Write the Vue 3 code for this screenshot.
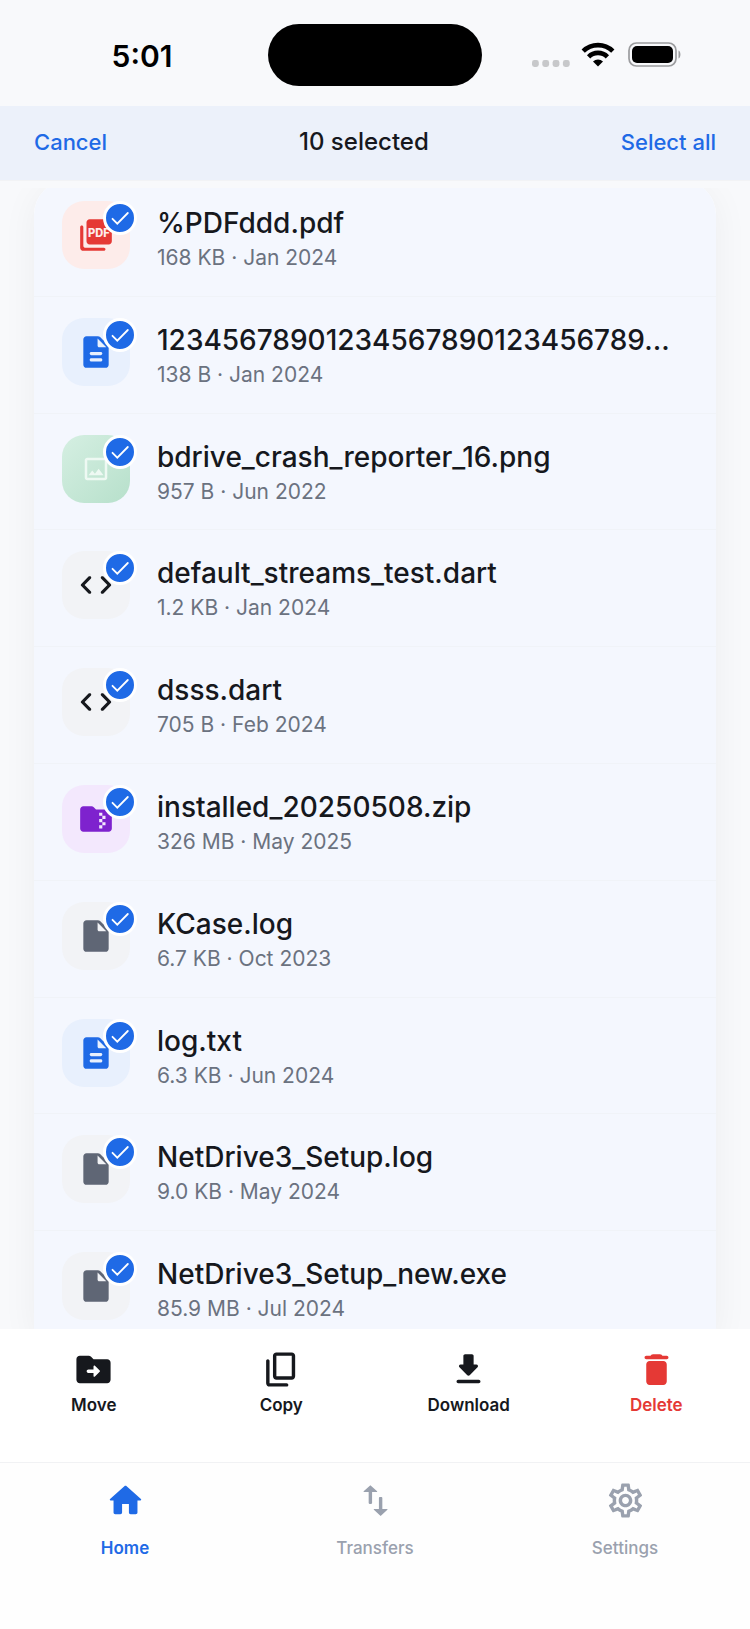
<script setup>
import { ref, computed } from 'vue'

const folder = 'M20 6h-8l-1.41-1.41C10.21 4.21 9.7 4 9.17 4H4c-1.1 0-2 .9-2 2v12c0 1.1.9 2 2 2h16c1.1 0 2-.9 2-2V8c0-1.1-.9-2-2-2z'
const sheet = 'M14.59 2.59c-.38-.38-.89-.59-1.42-.59H6c-1.1 0-2 .9-2 2v16c0 1.1.89 2 1.99 2H18c1.1 0 2-.9 2-2V8.83c0-.53-.21-1.04-.59-1.41l-4.82-4.83z'
const fold = 'M13 8V3.5L18.5 9H14c-.55 0-1-.45-1-1z'

const icons = {
  pdf: 'M20 2H8c-1.1 0-2 .9-2 2v12c0 1.1.9 2 2 2h12c1.1 0 2-.9 2-2V4c0-1.1-.9-2-2-2zM3 6c-.55 0-1 .45-1 1v13c0 1.1.9 2 2 2h13c.55 0 1-.45 1-1s-.45-1-1-1H5c-.55 0-1-.45-1-1V7c0-.55-.45-1-1-1z',
  text: sheet + 'M15 18H9c-.55 0-1-.45-1-1s.45-1 1-1h6c.55 0 1 .45 1 1s-.45 1-1 1zm0-4H9c-.55 0-1-.45-1-1s.45-1 1-1h6c.55 0 1 .45 1 1s-.45 1-1 1z' + fold,
  image: 'M19 5v14H5V5h14m0-2H5c-1.1 0-2 .9-2 2v14c0 1.1.9 2 2 2h14c1.1 0 2-.9 2-2V5c0-1.1-.9-2-2-2zm-4.86 8.86l-3 3.87L9 13.14 6 17h12l-3.86-5.14z',
  code: 'M8.7 15.9L4.8 12l3.9-3.9c.39-.39.39-1.01 0-1.4-.39-.39-1.01-.39-1.4 0l-4.59 4.59c-.39.39-.39 1.02 0 1.41l4.59 4.6c.39.39 1.01.39 1.4 0 .39-.39.39-1.01 0-1.4zm6.6 0l3.9-3.9-3.9-3.9c-.39-.39-.39-1.01 0-1.4.39-.39 1.01-.39 1.4 0l4.59 4.59c.39.39.39 1.02 0 1.41l-4.59 4.6c-.39.39-1.01.39-1.4 0-.39-.39-.39-1.01 0-1.4z',
  zip: folder + 'M18 12h-2v2h2v2h-2v2h-2v-2h2v-2h-2v-2h2v-2h-2V8h2v2h2v2z',
  file: sheet + fold,
}

const files = ref([
  { name: '%PDFddd.pdf', info: '168 KB · Jan 2024', kind: 'pdf', selected: true },
  { name: '12345678901234567890123456789…', info: '138 B · Jan 2024', kind: 'text', selected: true },
  { name: 'bdrive_crash_reporter_16.png', info: '957 B · Jun 2022', kind: 'image', selected: true },
  { name: 'default_streams_test.dart', info: '1.2 KB · Jan 2024', kind: 'code', selected: true },
  { name: 'dsss.dart', info: '705 B · Feb 2024', kind: 'code', selected: true },
  { name: 'installed_20250508.zip', info: '326 MB · May 2025', kind: 'zip', selected: true },
  { name: 'KCase.log', info: '6.7 KB · Oct 2023', kind: 'file', selected: true },
  { name: 'log.txt', info: '6.3 KB · Jun 2024', kind: 'text', selected: true },
  { name: 'NetDrive3_Setup.log', info: '9.0 KB · May 2024', kind: 'file', selected: true },
  { name: 'NetDrive3_Setup_new.exe', info: '85.9 MB · Jul 2024', kind: 'file', selected: true },
])
const count = computed(() => files.value.filter((f) => f.selected).length)
const setAll = (value) => files.value.forEach((f) => { f.selected = value })

const actions = [
  { label: 'Move', path: folder + 'M12 15.79V14H9c-.55 0-1-.45-1-1s.45-1 1-1h3v-1.79c0-.45.54-.67.85-.35l2.79 2.79c.2.2.2.51 0 .71l-2.79 2.79c-.31.31-.85.09-.85-.36z' },
  { label: 'Copy', path: 'M15 20H5V7c0-.55-.45-1-1-1s-1 .45-1 1v13c0 1.1.9 2 2 2h10c.55 0 1-.45 1-1s-.45-1-1-1zm5-4V4c0-1.1-.9-2-2-2H9c-1.1 0-2 .9-2 2v12c0 1.1.9 2 2 2h9c1.1 0 2-.9 2-2zm-2 0H9V4h9v12z' },
  { label: 'Download', path: 'M16.59 9H15V4c0-.55-.45-1-1-1h-4c-.55 0-1 .45-1 1v5H7.41c-.89 0-1.34 1.08-.71 1.71l4.59 4.59c.39.39 1.02.39 1.41 0l4.59-4.59c.63-.63.19-1.71-.7-1.71zM5 19c0 .55.45 1 1 1h12c.55 0 1-.45 1-1s-.45-1-1-1H6c-.55 0-1 .45-1 1z' },
  { label: 'Delete', danger: true, path: 'M6 19c0 1.1.9 2 2 2h8c1.1 0 2-.9 2-2V9c0-1.1-.9-2-2-2H8c-1.1 0-2 .9-2 2v10zM18 4h-2.5l-.71-.71c-.18-.18-.44-.29-.7-.29H9.91c-.26 0-.52.11-.7.29L8.5 4H6c-.55 0-1 .45-1 1s.45 1 1 1h12c.55 0 1-.45 1-1s-.45-1-1-1z' },
]

const tabs = [
  { label: 'Home', active: true, path: 'M10 19v-5h4v5c0 .55.45 1 1 1h3c.55 0 1-.45 1-1v-7h1.7c.46 0 .68-.57.33-.87L12.67 3.6c-.38-.34-.96-.34-1.34 0l-8.36 7.53c-.34.3-.13.87.33.87H5v7c0 .55.45 1 1 1h3c.55 0 1-.45 1-1z' },
  { label: 'Transfers', path: 'M16 17.01V10.5c0-.3-.2-.5-.5-.5h-1c-.3 0-.5.2-.5.5v6.51h-2.8c-.2 0-.3.25-.15.4L15 21l3.95-3.59c.15-.15.05-.4-.15-.4H16zM9 3L5.05 6.59c-.15.15-.05.4.15.4H8v6.51c0 .3.2.5.5.5h1c.3 0 .5-.2.5-.5V6.99h2.8c.2 0 .3-.25.15-.4L9 3z' },
  { label: 'Settings', path: 'M19.43 12.98c.04-.32.07-.64.07-.98 0-.34-.03-.66-.07-.98l2.11-1.65c.19-.15.24-.42.12-.64l-2-3.46c-.09-.16-.26-.25-.44-.25-.06 0-.12.01-.17.03l-2.49 1c-.52-.4-1.08-.73-1.69-.98l-.38-2.65C14.46 2.18 14.25 2 14 2h-4c-.25 0-.46.18-.49.42l-.38 2.65c-.61.25-1.17.59-1.69.98l-2.49-1c-.06-.02-.12-.03-.18-.03-.17 0-.34.09-.43.25l-2 3.46c-.13.22-.07.49.12.64l2.11 1.65c-.04.32-.07.65-.07.98 0 .33.03.66.07.98l-2.11 1.65c-.19.15-.24.42-.12.64l2 3.46c.09.16.26.25.44.25.06 0 .12-.01.17-.03l2.49-1c.52.4 1.08.73 1.69.98l.38 2.65c.03.24.24.42.49.42h4c.25 0 .46-.18.49-.42l.38-2.65c.61-.25 1.17-.59 1.69-.98l2.49 1c.06.02.12.03.18.03.17 0 .34-.09.43-.25l2-3.46c.12-.22.07-.49-.12-.64l-2.11-1.65zm-1.98-1.71c.04.31.05.52.05.73 0 .21-.02.43-.05.73l-.14 1.13.89.7 1.08.84-.7 1.21-1.27-.51-1.04-.42-.9.68c-.43.32-.84.56-1.25.73l-1.06.43-.16 1.13-.2 1.35h-1.4l-.19-1.35-.16-1.13-1.06-.43c-.43-.18-.83-.41-1.23-.71l-.91-.7-1.06.43-1.27.51-.7-1.21 1.08-.84.89-.7-.14-1.13c-.03-.31-.05-.54-.05-.74s.02-.43.05-.73l.14-1.13-.89-.7-1.08-.84.7-1.21 1.27.51 1.04.42.9-.68c.43-.32.84-.56 1.25-.73l1.06-.43.16-1.13.2-1.35h1.39l.19 1.35.16 1.13 1.06.43c.43.18.83.41 1.23.71l.91.7 1.06-.43 1.27-.51.7 1.21-1.07.85-.89.7.14 1.13zM12 8c-2.21 0-4 1.79-4 4s1.79 4 4 4 4-1.79 4-4-1.79-4-4-4zm0 6c-1.1 0-2-.9-2-2s.9-2 2-2 2 .9 2 2-.9 2-2 2z' },
]
</script>

<template>
  <div class="screen">
    <div class="status">
      <time class="clock">5:01</time>
      <div class="island"></div>
      <div class="signals" aria-hidden="true">
        <svg class="dots" viewBox="0 0 38 8">
          <rect v-for="n in 4" :key="n" :x="(n - 1) * 10.3" y="0" width="6.8" height="7" rx="2.4" />
        </svg>
        <svg class="wifi" viewBox="0 0 34 26">
          <path d="M2.2 9.2a21 21 0 0 1 29.6 0" />
          <path d="M7.6 14.8a13.2 13.2 0 0 1 18.8 0" />
          <path class="solid" d="M12 19.4a7.2 7.2 0 0 1 10 0L17 24.5z" />
        </svg>
        <svg class="battery" viewBox="0 0 54 26">
          <rect class="shell" x="1" y="1" width="47" height="23" rx="7.5" />
          <rect x="4" y="4" width="41" height="17" rx="5" />
          <path class="cap" d="M50.5 8.5c2.6.8 2.6 7.2 0 8z" />
        </svg>
      </div>
    </div>

    <header class="toolbar">
      <button type="button" @click="setAll(false)">Cancel</button>
      <h1>{{ count }} selected</h1>
      <button type="button" @click="setAll(true)">Select all</button>
    </header>

    <main class="content">
      <ul class="files">
        <li v-for="file in files" :key="file.name">
          <label class="row" :class="{ selected: file.selected }">
            <span class="tile" :class="file.kind">
              <svg class="glyph" viewBox="0 0 24 24" aria-hidden="true">
                <path fill-rule="evenodd" :d="icons[file.kind]" />
                <text v-if="file.kind === 'pdf'" x="7" y="13">PDF</text>
              </svg>
              <span class="badge">
                <input v-model="file.selected" type="checkbox" :aria-label="file.name" />
                <svg v-if="file.selected" viewBox="0 0 28 28" aria-hidden="true">
                  <path d="M6.5 14.8l4.8 4.9L21.8 9" />
                </svg>
              </span>
            </span>
            <span class="details">
              <span class="name">{{ file.name }}</span>
              <span class="info">{{ file.info }}</span>
            </span>
          </label>
        </li>
      </ul>
    </main>

    <div class="actions">
      <button v-for="action in actions" :key="action.label" type="button" :class="{ danger: action.danger }">
        <svg viewBox="0 0 24 24" aria-hidden="true"><path fill-rule="evenodd" :d="action.path" /></svg>
        <span>{{ action.label }}</span>
      </button>
    </div>

    <nav class="tabs">
      <a v-for="tab in tabs" :key="tab.label" href="#" :class="{ active: tab.active }">
        <svg viewBox="0 0 24 24" aria-hidden="true"><path fill-rule="evenodd" :d="tab.path" /></svg>
        <span>{{ tab.label }}</span>
      </a>
    </nav>
  </div>
</template>

<style>
body {
  margin: 0;
  background: #f8f9fb;
}
</style>

<style scoped>
.screen {
  display: flex;
  flex-direction: column;
  min-height: 100vh;
  background: #f8f9fb;
  color: #16181d;
  font-family: Inter, "Liberation Sans", sans-serif;
}
button {
  border: 0;
  background: none;
  padding: 0;
  font: inherit;
  color: inherit;
  cursor: pointer;
}

.status {
  display: grid;
  grid-template-columns: 1fr 214px 1fr;
  align-items: center;
  padding: 24px 0 20px;
}
.clock {
  padding: 2px 0 0 16px;
  text-align: center;
  color: #000;
  font-size: 30px;
  font-weight: 600;
  line-height: 36px;
}
.island {
  height: 62px;
  border-radius: 31px;
  background: #000;
}
.signals {
  display: flex;
  align-items: center;
  padding-left: 50px;
}
.dots {
  width: 38px;
  height: 8px;
  margin: 18px 11px 0 0;
  fill: #c7c8ca;
}
.wifi {
  width: 34px;
  height: 26px;
  margin-right: 13px;
  fill: none;
  stroke: #000;
  stroke-width: 4.6;
}
.wifi .solid {
  fill: #000;
  stroke: none;
}
.battery {
  width: 54px;
  height: 26px;
}
.battery .shell {
  fill: none;
  stroke: #9b9c9e;
  stroke-width: 1.7;
}
.battery .cap {
  fill: #9b9c9e;
}

.toolbar {
  display: flex;
  justify-content: space-between;
  align-items: center;
  padding: 20px 34px 22px;
  background: #ecf1fa;
  border-bottom: 1px solid #f2f3f5;
}
.toolbar button {
  color: #1f6ae6;
  font-size: 22px;
  font-weight: 500;
  line-height: 28px;
}
.toolbar h1 {
  margin: 0;
  font-size: 24px;
  font-weight: 500;
  line-height: 32px;
}

.content {
  flex: 1;
  display: grid;
  margin-top: 7px;
  overflow: hidden;
}
.files {
  display: grid;
  grid-auto-rows: 1fr;
  min-width: 0;
  margin: -8px 34px -19px;
  padding: 0;
  list-style: none;
  border-radius: 35px;
  background: #fff;
  box-shadow: 0 6px 36px rgba(0, 0, 0, 0.05);
}
.files li {
  min-width: 0;
  border-bottom: 1px solid #f0f3f8;
}
.row {
  display: flex;
  align-items: flex-start;
  gap: 27px;
  box-sizing: border-box;
  height: 100%;
  padding: 21px 28px 0;
  cursor: pointer;
}
.row.selected {
  background: #f4f7fe;
}
.files li:first-child .row {
  border-radius: 35px 35px 0 0;
}
.tile {
  position: relative;
  flex: none;
  display: grid;
  place-items: center;
  width: 68px;
  height: 68px;
  border-radius: 22px;
  background: #f2f3f6;
}
.glyph {
  width: 38px;
  height: 38px;
  fill: #5f6675;
}
.glyph text {
  fill: #fdecea;
  font-size: 7px;
  font-weight: 800;
}
.tile.pdf {
  background: #fdecea;
}
.tile.pdf .glyph path {
  fill: #e53935;
}
.tile.text {
  background: #e8f0fd;
}
.tile.text .glyph {
  fill: #1f6ae6;
}
.tile.image {
  background: linear-gradient(135deg, #d5efe2, #b7e0cb);
}
.tile.image .glyph {
  width: 30px;
  height: 30px;
  fill: #eef9f3;
}
.tile.code .glyph {
  fill: #16181d;
}
.tile.zip {
  background: #f3e8fd;
}
.tile.zip .glyph {
  fill: #7e22ce;
}
.badge {
  position: absolute;
  top: 0;
  right: -7px;
  display: grid;
  width: 34px;
  height: 34px;
}
.badge > * {
  grid-area: 1 / 1;
}
.badge input {
  appearance: none;
  margin: 0;
  border: 3px solid #fff;
  border-radius: 50%;
  background: #fff;
}
.badge input:checked {
  background: #1f6ae6;
}
.badge svg {
  margin: 3px;
  fill: none;
  stroke: #fff;
  stroke-width: 1.8;
  stroke-linecap: round;
  pointer-events: none;
}
.details {
  flex: 1;
  display: flex;
  flex-direction: column;
  gap: 4px;
  min-width: 0;
  padding-top: 5px;
}
.name {
  overflow: hidden;
  white-space: nowrap;
  text-overflow: ellipsis;
  font-size: 28px;
  font-weight: 500;
  line-height: 34px;
}
.info {
  color: #6b7280;
  font-size: 21px;
  line-height: 28px;
}

.actions {
  display: grid;
  grid-template-columns: repeat(4, 1fr);
  padding: 20px 0 45px;
  background: #fff;
}
.actions button,
.tabs a {
  display: flex;
  flex-direction: column;
  align-items: center;
  font-size: 17px;
  line-height: 24px;
}
.actions button {
  gap: 3px;
  font-weight: 600;
}
.actions svg,
.tabs svg {
  width: 41px;
  height: 41px;
  fill: currentColor;
}
.actions .danger {
  color: #e53935;
}

.tabs {
  display: grid;
  grid-template-columns: repeat(3, 1fr);
  padding: 17px 0 69px;
  border-top: 1px solid #f1f2f4;
  background: #fefefe;
}
.tabs a {
  gap: 15px;
  color: #9aa1ae;
  font-weight: 500;
  text-decoration: none;
}
.tabs .active {
  color: #1f6ae6;
  font-weight: 600;
}
</style>
